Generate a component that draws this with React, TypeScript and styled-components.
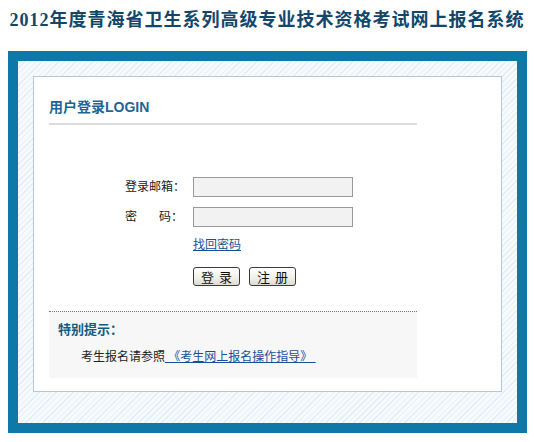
import React from "react";
import styled, { createGlobalStyle } from "styled-components";

const Global = createGlobalStyle`
  html, body { margin: 0; padding: 0; background: #ffffff; }
  body {
    padding: 0 8px;
    font-family: "Liberation Sans", "Noto Sans CJK SC", sans-serif;
    font-size: 12px;
    color: #222;
  }
`;

const Title = styled.h1`
  margin: 0 -8px;
  padding-top: 8px;
  height: 24px;
  line-height: 24px;
  text-align: center;
  font-family: "Liberation Serif", "Noto Sans CJK SC", serif;
  font-size: 18px;
  font-weight: bold;
  letter-spacing: 1px;
  color: #12476a;
  white-space: nowrap;
`;

const Frame = styled.div`
  margin-top: 19px;
  width: 519px;
  box-sizing: border-box;
  border: 10px solid #0e79a9;
  padding: 15px 15px 31px 15px;
  background-color: #f6fafd;
  background-image: repeating-linear-gradient(
    -45deg,
    #f6fafd 0px,
    #f6fafd 3px,
    #e2edf5 3px,
    #e2edf5 4px
  );
`;

const Panel = styled.div`
  box-sizing: border-box;
  height: 316px;
  background: #ffffff;
  border: 1px solid #b7c8d4;
  padding: 0 15px;
`;

const Column = styled.div`
  width: 368px;
`;

const Heading = styled.div`
  margin-top: 20px;
  padding-bottom: 6px;
  line-height: 20px;
  border-bottom: 2px solid #dcdcdc;
  font-family: "Liberation Sans", "Noto Sans CJK SC", sans-serif;
  font-size: 14px;
  font-weight: bold;
  color: #1d6593;
`;

const Form = styled.div`
  margin-top: 52px;
  display: grid;
  grid-template-columns: 134px 160px;
  column-gap: 10px;
  row-gap: 10px;
  align-items: center;
`;

const Label = styled.div`
  justify-self: end;
  width: 58px;
  display: flex;
  justify-content: space-between;
  line-height: 20px;
  color: #222;
  white-space: nowrap;
`;

const Input = styled.input`
  box-sizing: border-box;
  width: 160px;
  height: 20px;
  margin: 0;
  border: 1px solid #9a9a9a;
  background: #f2f2f2;
  padding: 0 3px;
`;

const Blank = styled.div``;

const LinkCell = styled.div`
  line-height: 16px;
`;

const BlueLink = styled.a`
  color: #17509a;
  text-decoration: underline;
  cursor: pointer;
`;

const Buttons = styled.div`
  display: flex;
  gap: 9px;
  margin-top: 4px;
`;

const Button = styled.button`
  box-sizing: border-box;
  width: 47px;
  height: 19px;
  margin: 0;
  padding: 0;
  border: 1px solid #3b3b3b;
  border-radius: 3px;
  background: linear-gradient(#ffffff, #f0efe8 60%, #dedcd2);
  font-family: "Noto Sans CJK SC", sans-serif;
  font-size: 13px;
  line-height: 17px;
  color: #111;
  word-spacing: 2px;
`;

const Tip = styled.div`
  margin-top: 25px;
  height: 67px;
  box-sizing: border-box;
  border-top: 1px dotted #777;
  background: #f7f7f7;
  padding: 9px 0 0 9px;
`;

const TipTitle = styled.div`
  line-height: 18px;
  font-size: 13px;
  font-weight: bold;
  color: #0f5c85;
`;

const TipText = styled.div`
  margin-top: 10px;
  padding-left: 23px;
  line-height: 16px;
  color: #222;
  white-space: pre;
`;

export default function App() {
  return (
    <>
      <Global />
      <Title>2012年度青海省卫生系列高级专业技术资格考试网上报名系统</Title>
      <Frame>
        <Panel>
          <Column>
            <Heading>用户登录LOGIN</Heading>
            <Form>
              <Label>
                <span>登录邮箱：</span>
              </Label>
              <Input type="text" />
              <Label>
                <span>密</span>
                <span>码：</span>
              </Label>
              <Input type="password" />
              <Blank />
              <LinkCell>
                <BlueLink>找回密码</BlueLink>
              </LinkCell>
              <Blank />
              <Buttons>
                <Button>登 录</Button>
                <Button>注 册</Button>
              </Buttons>
            </Form>
            <Tip>
              <TipTitle>特别提示：</TipTitle>
              <TipText>
                考生报名请参照<BlueLink> 《考生网上报名操作指导》 </BlueLink>
              </TipText>
            </Tip>
          </Column>
        </Panel>
      </Frame>
    </>
  );
}
